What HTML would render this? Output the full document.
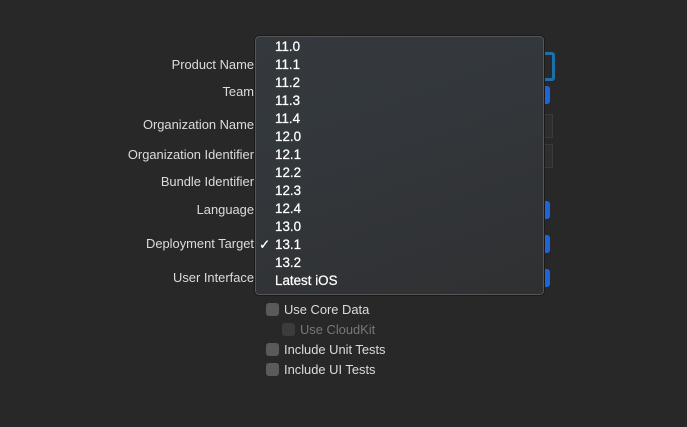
<!DOCTYPE html>
<html><head><style>
body{margin:0;width:687px;height:427px;background:#282828;font-family:"Liberation Sans",sans-serif;overflow:hidden;position:relative;color:#dedede}
.l{position:absolute;right:433px;font-size:12.9px;color:#dcdcdc;white-space:nowrap}
.b{position:absolute;left:540px;width:10px;height:18px;background:#1d65d8;border-radius:3px}
.f{position:absolute;left:540px;width:11px;height:22px;background:#2e2e2e;border:1px solid #3a3a3a}
.menu{position:absolute;left:254px;top:35px;width:289px;height:259px;border:1px solid #1a1a1a;border-radius:5px;background:linear-gradient(160deg,#34393e 0%,#33373b 40%,#2f3032 100%);box-shadow:0 0 0 1px #555 inset}
.i{position:absolute;left:20px;font-size:13.4px;color:#fff;-webkit-text-stroke:0.25px #fff}
.cb{position:absolute;width:13px;height:13px;border-radius:3px;background:#5a5a5a}
.ct{position:absolute;font-size:12.9px;color:#dcdcdc}
</style></head><body>
<div class="l" style="top:57px">Product Name</div>
<div class="l" style="top:84px">Team</div>
<div class="l" style="top:117px">Organization Name</div>
<div class="l" style="top:147px">Organization Identifier</div>
<div class="l" style="top:174px">Bundle Identifier</div>
<div class="l" style="top:202px">Language</div>
<div class="l" style="top:236px">Deployment Target</div>
<div class="l" style="top:270px">User Interface</div>
<div style="position:absolute;left:538px;top:52px;width:11px;height:23px;border:3px solid #1d6fa8;border-radius:3px"></div>
<div class="b" style="top:86px"></div>
<div class="f" style="top:114px"></div>
<div class="f" style="top:144px"></div>
<div class="b" style="top:201px"></div>
<div class="b" style="top:235px"></div>
<div class="b" style="top:269px"></div>
<div class="menu">
<div class="i" style="top:3px">11.0</div>
<div class="i" style="top:21px">11.1</div>
<div class="i" style="top:39px">11.2</div>
<div class="i" style="top:57px">11.3</div>
<div class="i" style="top:75px">11.4</div>
<div class="i" style="top:93px">12.0</div>
<div class="i" style="top:111px">12.1</div>
<div class="i" style="top:129px">12.2</div>
<div class="i" style="top:147px">12.3</div>
<div class="i" style="top:165px">12.4</div>
<div class="i" style="top:183px">13.0</div>
<div class="i" style="top:201px;left:4px">✓</div><div class="i" style="top:201px">13.1</div>
<div class="i" style="top:219px">13.2</div>
<div class="i" style="top:237px">Latest iOS</div>
</div>
<div class="cb" style="left:266px;top:303px"></div><div class="ct" style="left:284px;top:302px">Use Core Data</div>
<div class="cb" style="left:282px;top:323px;background:#3c3c3c"></div><div class="ct" style="left:300px;top:322px;color:#777">Use CloudKit</div>
<div class="cb" style="left:266px;top:343px"></div><div class="ct" style="left:284px;top:342px">Include Unit Tests</div>
<div class="cb" style="left:266px;top:363px"></div><div class="ct" style="left:284px;top:362px">Include UI Tests</div>
</body></html>
